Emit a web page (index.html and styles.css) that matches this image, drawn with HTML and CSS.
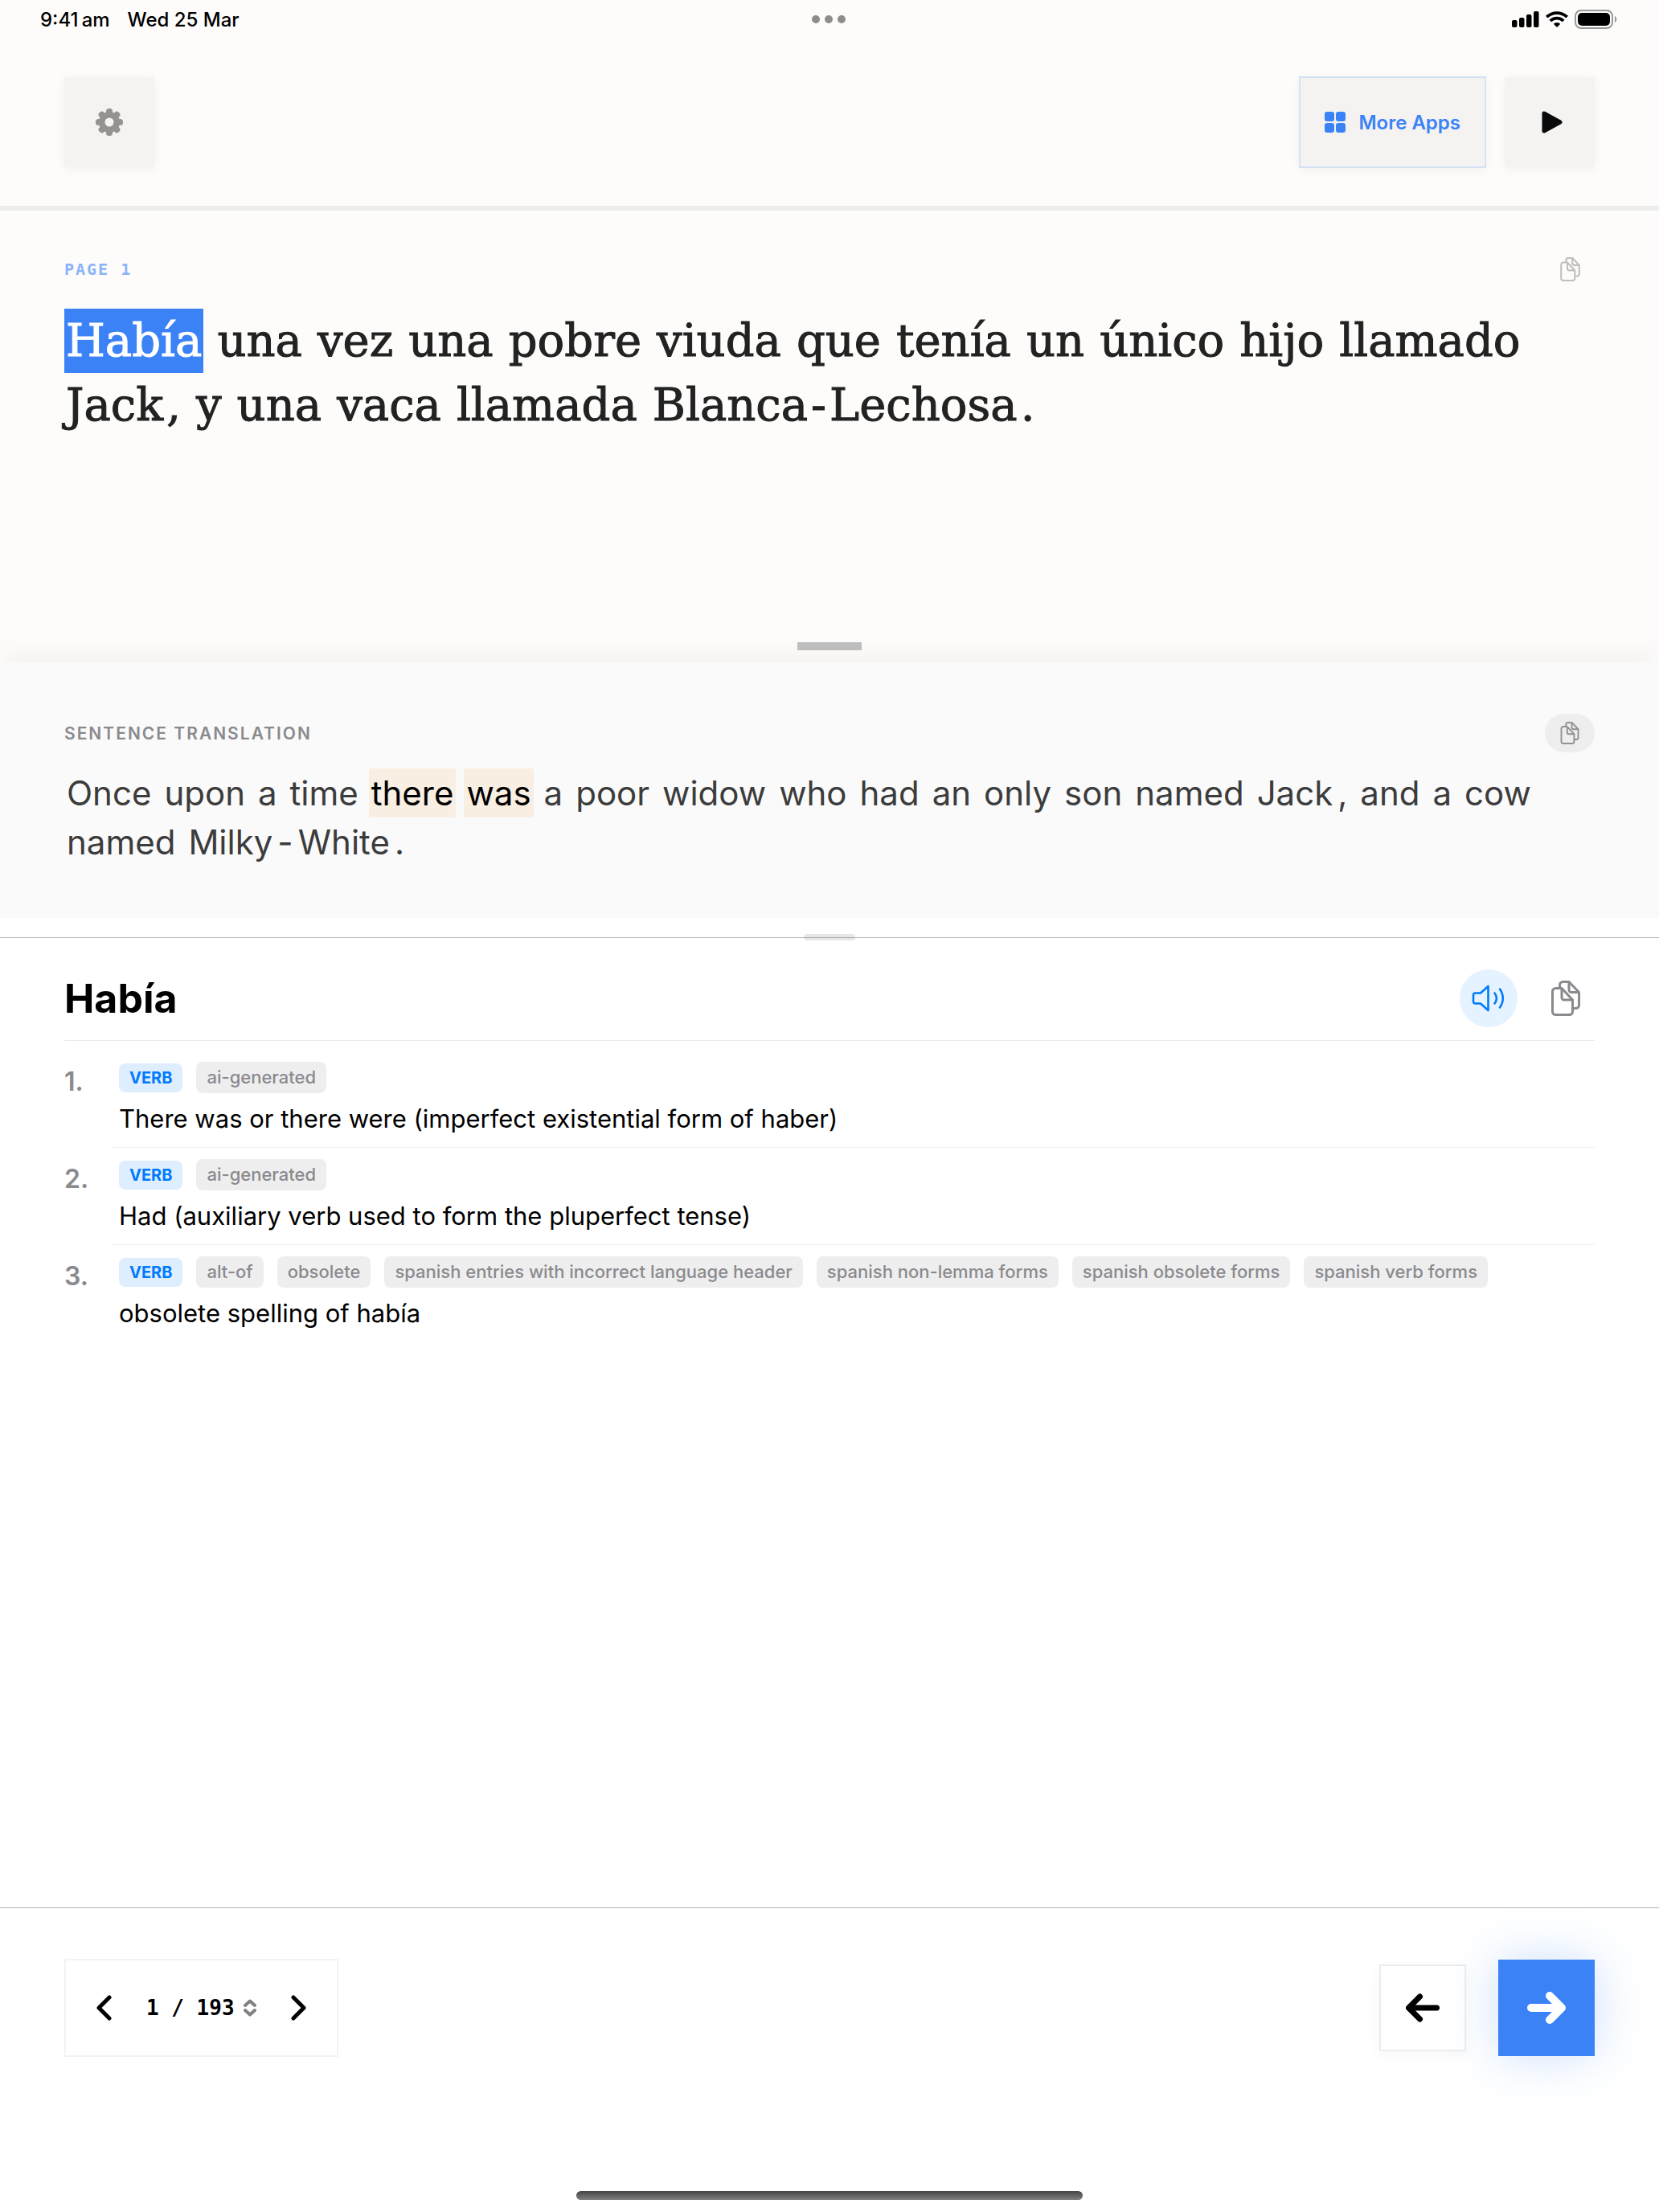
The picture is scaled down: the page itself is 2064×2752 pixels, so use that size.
FILE: index.html
```html
<!DOCTYPE html>
<html lang="en">
<head>
    <meta charset="UTF-8">
    <meta name="viewport" content="width=device-width, initial-scale=1.0">
    <title>Page 1</title>
    <link rel="stylesheet" href="styles.css">
</head>
<body>
<!-- Shared icons -->
<svg class="sprite" aria-hidden="true">
    <symbol id="icon-copy" viewBox="0 0 36 44">
        <g fill="none" stroke="currentColor" stroke-width="3" stroke-linejoin="round">
            <path d="M10.500 9.500V5.500a4 4 0 0 1 4-4H22L34.500 14.500V30.500a4 4 0 0 1-4 4H27"/>
            <path d="M22 1.500V11.500a3 3 0 0 0 3 3H34.500"/>
            <path d="M1.500 13.500a4 4 0 0 1 4-4H13L26.500 24V38.500a4 4 0 0 1-4 4H5.500a4 4 0 0 1-4-4Z"/>
            <path d="M13 9.500V21a3 3 0 0 0 3 3H26.500"/>
        </g>
    </symbol>
</svg>

<header class="top">
    <div class="status-bar">
        <div class="status-left">
            <span>9:41&#8201;am</span>
            <span>Wed 25 Mar</span>
        </div>
        <div class="dots"><i></i><i></i><i></i></div>
        <div class="status-right">
            <svg width="34" height="20" viewBox="0 0 34 20">
                <rect x="0" y="11" width="6.500" height="9" rx="2"/>
                <rect x="9" y="8" width="6.500" height="12" rx="2"/>
                <rect x="18" y="4" width="6.500" height="16" rx="2"/>
                <rect x="27" y="0" width="6.500" height="20" rx="2"/>
            </svg>
            <svg width="28" height="20" viewBox="0 0 28 20">
                <g fill="none" stroke="#000" stroke-width="3.800">
                    <path d="M1.300 7.200a18.200 18.200 0 0 1 25.400 0"/>
                    <path d="M5.800 12a11.800 11.800 0 0 1 16.400 0"/>
                </g>
                <path d="M14 20l-4.200-4.300a6 6 0 0 1 8.400 0z"/>
            </svg>
            <svg width="53" height="24" viewBox="0 0 53 24">
                <rect x="1" y="1" width="46" height="22" rx="7" fill="none" stroke="#999" stroke-width="2"/>
                <rect x="4" y="4" width="40" height="16" rx="5"/>
                <path d="M50 8c3 1 3 7 0 8z" fill="#999"/>
            </svg>
        </div>
    </div>

    <div class="toolbar">
        <button class="tool-btn settings" aria-label="Settings">
            <svg width="34" height="34" viewBox="0 0 34 34">
                <g fill="currentColor">
                    <rect x="13" y="0" width="8" height="34" rx="3.500"/>
                    <rect x="13" y="0" width="8" height="34" rx="3.500" transform="rotate(45 17 17)"/>
                    <rect x="13" y="0" width="8" height="34" rx="3.500" transform="rotate(90 17 17)"/>
                    <rect x="13" y="0" width="8" height="34" rx="3.500" transform="rotate(135 17 17)"/>
                    <circle cx="17" cy="17" r="13"/>
                </g>
                <circle cx="17" cy="17" r="5.500" fill="#f4f3f1"/>
            </svg>
        </button>
        <div class="toolbar-right">
            <button class="tool-btn more-apps">
                <svg width="26" height="26" viewBox="0 0 26 26" fill="currentColor">
                    <rect x="0" y="0" width="12" height="12" rx="3"/>
                    <rect x="14" y="0" width="12" height="12" rx="3"/>
                    <rect x="0" y="14" width="12" height="12" rx="3"/>
                    <rect x="14" y="14" width="12" height="12" rx="3"/>
                </svg>
                More Apps
            </button>
            <button class="tool-btn play" aria-label="Play">
                <svg width="26" height="28" viewBox="0 0 26 28">
                    <path d="M3 3V25L23 14Z" fill="currentColor" stroke="currentColor" stroke-width="5" stroke-linejoin="round"/>
                </svg>
            </button>
        </div>
    </div>
</header>

<main>
    <section class="reader">
        <div class="label-row">
            <h2 class="page-label">PAGE 1</h2>
            <button class="copy-btn plain" aria-label="Copy sentence">
                <svg width="25" height="30"><use href="#icon-copy"/></svg>
            </button>
        </div>
        <p class="words sentence" lang="es">
            <span class="word active">Había</span>
            <span class="word">una</span>
            <span class="word">vez</span>
            <span class="word">una</span>
            <span class="word">pobre</span>
            <span class="word">viuda</span>
            <span class="word">que</span>
            <span class="word">tenía</span>
            <span class="word">un</span>
            <span class="word">único</span>
            <span class="word">hijo</span>
            <span class="word">llamado</span>
            <span class="group"><span class="word">Jack</span><span class="word">,</span></span>
            <span class="word">y</span>
            <span class="word">una</span>
            <span class="word">vaca</span>
            <span class="word">llamada</span>
            <span class="group"><span class="word">Blanca</span><span class="word">-</span><span class="word">Lechosa</span><span class="word">.</span></span>
        </p>
        <div class="handle"></div>
    </section>

    <section class="translation">
        <div class="label-row">
            <h2 class="translation-label">SENTENCE TRANSLATION</h2>
            <button class="copy-btn" aria-label="Copy translation">
                <svg width="24" height="28"><use href="#icon-copy"/></svg>
            </button>
        </div>
        <p class="words translated">
            <span class="word">Once</span>
            <span class="word">upon</span>
            <span class="word">a</span>
            <span class="word">time</span>
            <span class="word match">there</span>
            <span class="word match">was</span>
            <span class="word">a</span>
            <span class="word">poor</span>
            <span class="word">widow</span>
            <span class="word">who</span>
            <span class="word">had</span>
            <span class="word">an</span>
            <span class="word">only</span>
            <span class="word">son</span>
            <span class="word">named</span>
            <span class="group"><span class="word">Jack</span><span class="word">,</span></span>
            <span class="word">and</span>
            <span class="word">a</span>
            <span class="word">cow</span>
            <span class="word">named</span>
            <span class="group"><span class="word">Milky</span><span class="word">-</span><span class="word">White</span><span class="word">.</span></span>
        </p>
    </section>

    <section class="dictionary">
        <div class="grip"></div>
        <div class="entry-head">
            <h1 lang="es">Había</h1>
            <div class="entry-actions">
                <button class="audio-btn" aria-label="Play pronunciation">
                    <svg width="42" height="34" viewBox="0 0 42 34" fill="none" stroke="currentColor" stroke-width="2.600" stroke-linecap="round" stroke-linejoin="round">
                        <path d="M20.500 2V32L11 23.500H4.500a2.500 2.500 0 0 1-2.500-2.500V13a2.500 2.500 0 0 1 2.500-2.500H11Z"/>
                        <path d="M28.500 10.500c3 4 3 9 0 13"/>
                        <path d="M35 5.500c5 7 5 16 0 23"/>
                    </svg>
                </button>
                <button class="entry-copy" aria-label="Copy definition">
                    <svg width="36" height="44"><use href="#icon-copy"/></svg>
                </button>
            </div>
        </div>
        <ol class="senses">
            <li>
                <span class="number">1.</span>
                <div class="sense">
                    <div class="tags">
                        <span class="pos">VERB</span>
                        <span class="tag">ai-generated</span>
                    </div>
                    <p>There was or there were (imperfect existential form of haber)</p>
                </div>
            </li>
            <li>
                <span class="number">2.</span>
                <div class="sense">
                    <div class="tags">
                        <span class="pos">VERB</span>
                        <span class="tag">ai-generated</span>
                    </div>
                    <p>Had (auxiliary verb used to form the pluperfect tense)</p>
                </div>
            </li>
            <li>
                <span class="number">3.</span>
                <div class="sense">
                    <div class="tags">
                        <span class="pos">VERB</span>
                        <span class="tag">alt-of</span>
                        <span class="tag">obsolete</span>
                        <span class="tag">spanish entries with incorrect language header</span>
                        <span class="tag">spanish non-lemma forms</span>
                        <span class="tag">spanish obsolete forms</span>
                        <span class="tag">spanish verb forms</span>
                    </div>
                    <p>obsolete spelling of había</p>
                </div>
            </li>
        </ol>
    </section>
</main>

<footer class="bottom">
    <div class="controls">
        <div class="pager">
            <button class="pager-btn" aria-label="Previous page">
                <svg width="20" height="32" viewBox="0 0 20 32"><path d="M17 3L4 16L17 29"/></svg>
            </button>
            <button class="jump">
                <span>1 / 193</span>
                <svg width="16" height="22" viewBox="0 0 16 22"><path d="M2 8L8 2.500L14 8M2 14L8 19.500L14 14"/></svg>
            </button>
            <button class="pager-btn" aria-label="Next page">
                <svg width="20" height="32" viewBox="0 0 20 32"><path d="M3 3L16 16L3 29"/></svg>
            </button>
        </div>
        <div class="steps">
            <button class="step-btn back" aria-label="Previous sentence">
                <svg width="42" height="36" viewBox="0 0 42 36"><path d="M38.500 18H4M17.500 4L3.500 18L17.500 32"/></svg>
            </button>
            <button class="step-btn next" aria-label="Next sentence">
                <svg width="48" height="40" viewBox="0 0 48 40"><path d="M5 20H42M28 5L43 20L28 35"/></svg>
            </button>
        </div>
    </div>
    <div class="home-indicator"></div>
</footer>
</body>
</html>
```
FILE: styles.css
```css
* {
    margin: 0;
    padding: 0;
    box-sizing: border-box;
}

body {
    min-height: 100vh;
    display: flex;
    flex-direction: column;
    background-color: #fff;
    color: #000;
    font-family: Inter, 'Liberation Sans', sans-serif;
}

button {
    display: flex;
    align-items: center;
    justify-content: center;
    border: none;
    background: none;
    color: inherit;
    font: inherit;
    cursor: pointer;
}

.sprite {
    position: absolute;
    width: 0;
    height: 0;
}

/* Status bar and toolbar */
.top {
    background-color: #fdfcfa;
    border-bottom: 6px solid #ededeb;
}

.status-bar {
    display: grid;
    grid-template-columns: 1fr auto 1fr;
    align-items: center;
    height: 48px;
    padding: 0 52px 0 50px;
    font-size: 24px;
    font-weight: 500;
}

.status-left {
    display: flex;
    gap: 22px;
}

.status-right {
    display: flex;
    justify-content: flex-end;
    align-items: center;
    gap: 8px;
}

.dots {
    display: flex;
    gap: 6px;
}

.dots i {
    width: 10px;
    height: 10px;
    border-radius: 50%;
    background-color: #8e8d8c;
}

.toolbar {
    display: flex;
    align-items: center;
    justify-content: space-between;
    padding: 47px 80px;
}

.toolbar-right {
    display: flex;
    align-items: center;
    gap: 23px;
}

.tool-btn {
    width: 112px;
    height: 112px;
    background-color: #f4f3f1;
    box-shadow: 0 2px 12px rgba(0, 0, 0, 0.05);
}

.settings {
    color: #94938f;
}

.play {
    padding-left: 6px;
    color: #0a0a0a;
}

.more-apps {
    gap: 16px;
    width: auto;
    height: 114px;
    padding: 0 30px;
    border: 2px solid #d5e1f5;
    color: #3b82f6;
    font-size: 24px;
    font-weight: 600;
}

main {
    flex: 1;
    display: flex;
    flex-direction: column;
}

/* Source sentence */
.reader {
    display: flex;
    flex-direction: column;
    min-height: 562px;
    padding: 49px 80px 15px;
    background-color: #fdfcfa;
}

.label-row {
    display: flex;
    align-items: center;
    justify-content: space-between;
}

.page-label {
    color: #89b4fa;
    font-family: 'DejaVu Sans Mono', monospace;
    font-size: 20px;
    font-weight: 700;
    letter-spacing: 2px;
}

.copy-btn {
    width: 62px;
    height: 48px;
    border-radius: 24px;
    background-color: #eeeeef;
    color: #919194;
}

.copy-btn.plain {
    background: none;
    color: #bfbebd;
}

.words {
    display: flex;
    flex-wrap: wrap;
}

.group {
    display: flex;
}

.sentence {
    column-gap: 15px;
    margin-top: 25px;
    color: #222;
    font-family: 'DejaVu Serif', serif;
    font-size: 56px;
    line-height: 80px;
    -webkit-text-stroke: 1px currentColor;
}

.sentence .word {
    padding: 0 2px;
}

.word.active {
    background-color: #3b82f6;
    color: #fff;
}

.handle {
    width: 80px;
    height: 10px;
    margin: auto auto 0;
    background-color: #c0c0c0;
}

/* Translation */
.translation {
    padding: 64px 80px;
    background-color: #fafafa;
    box-shadow: 0 -20px 24px -4px rgba(0, 0, 0, 0.03);
}

.translation-label {
    color: #8a8a8e;
    font-size: 21px;
    font-weight: 600;
    letter-spacing: 2px;
}

.translated {
    column-gap: 10px;
    margin-top: 20px;
    color: #3c3c3c;
    font-size: 42px;
    line-height: 61px;
}

.translated .word {
    padding: 0 3px;
}

.translated .match {
    background-color: #f9eee2;
    color: #000;
}

/* Dictionary */
.dictionary {
    position: relative;
    z-index: 1;
    flex: 1;
    margin-top: 24px;
    padding: 0 80px;
    border-top: 1px solid #b8b8b9;
    background-color: #fff;
}

.grip {
    position: absolute;
    top: -5px;
    left: 50%;
    width: 64px;
    height: 8px;
    margin-left: -32px;
    border-radius: 4px;
    background-color: rgba(120, 120, 120, 0.18);
}

.entry-head {
    display: flex;
    align-items: center;
    justify-content: space-between;
    padding: 39px 0 16px;
    border-bottom: 1px solid #ebebeb;
}

.entry-head h1 {
    font-size: 50px;
    font-weight: 700;
}

.entry-actions {
    display: flex;
    align-items: center;
    gap: 24px;
}

.audio-btn {
    width: 72px;
    height: 72px;
    border-radius: 50%;
    background-color: #e5f2ff;
    color: #007aff;
}

.entry-copy {
    width: 72px;
    height: 72px;
    color: #8a8a8e;
}

.senses {
    padding-top: 12px;
    list-style: none;
}

.senses li {
    display: flex;
}

.number {
    width: 60px;
    padding-top: 19px;
    color: #8a8a8e;
    font-size: 32px;
    font-weight: 600;
    line-height: 40px;
}

.sense {
    flex: 1;
    padding: 14px 8px 13px;
    border-bottom: 1px solid #ebebeb;
}

.senses li:last-child .sense {
    border-bottom: none;
}

.sense p {
    margin-top: 10px;
    font-size: 31px;
    line-height: 44px;
}

.tags {
    display: flex;
    flex-wrap: wrap;
    align-items: center;
    gap: 17px;
}

.pos,
.tag {
    padding: 0 13px;
    border-radius: 8px;
}

.pos {
    background-color: #deeeff;
    color: #007aff;
    font-size: 20px;
    font-weight: 700;
    line-height: 36px;
}

.tag {
    background-color: #eeeeef;
    color: #8a8a8e;
    font-size: 22px;
    font-weight: 500;
    line-height: 39px;
}

/* Bottom controls */
.bottom {
    position: relative;
    z-index: 1;
    padding: 63px 80px 15px;
    border-top: 1px solid #b2b2b3;
}

.controls {
    display: flex;
    align-items: center;
    justify-content: space-between;
    margin-bottom: 167px;
}

.pager {
    display: flex;
    height: 122px;
    border: 2px solid #f3f3f3;
}

.pager svg,
.steps svg {
    fill: none;
    stroke: currentColor;
    stroke-linecap: round;
    stroke-linejoin: round;
}

.pager-btn {
    width: 93px;
    stroke-width: 5px;
}

.jump {
    gap: 11px;
    padding: 0 7px;
    font-family: 'DejaVu Sans Mono', monospace;
    font-size: 26px;
    font-weight: 700;
}

.jump svg {
    color: #808080;
    stroke-width: 4px;
}

.steps {
    display: flex;
    align-items: center;
    gap: 40px;
}

.step-btn.back {
    width: 108px;
    height: 108px;
    border: 2px solid #ededed;
    box-shadow: 0 4px 16px rgba(0, 0, 0, 0.04);
    stroke-width: 7px;
}

.step-btn.next {
    width: 120px;
    height: 120px;
    background-color: #3b82f6;
    box-shadow: 0 0 60px rgba(59, 130, 246, 0.25);
    color: #fff;
    stroke-width: 10px;
}

.home-indicator {
    width: 630px;
    height: 11px;
    margin: 0 auto;
    border-radius: 6px;
    background: linear-gradient(#444, #808080);
}
```
